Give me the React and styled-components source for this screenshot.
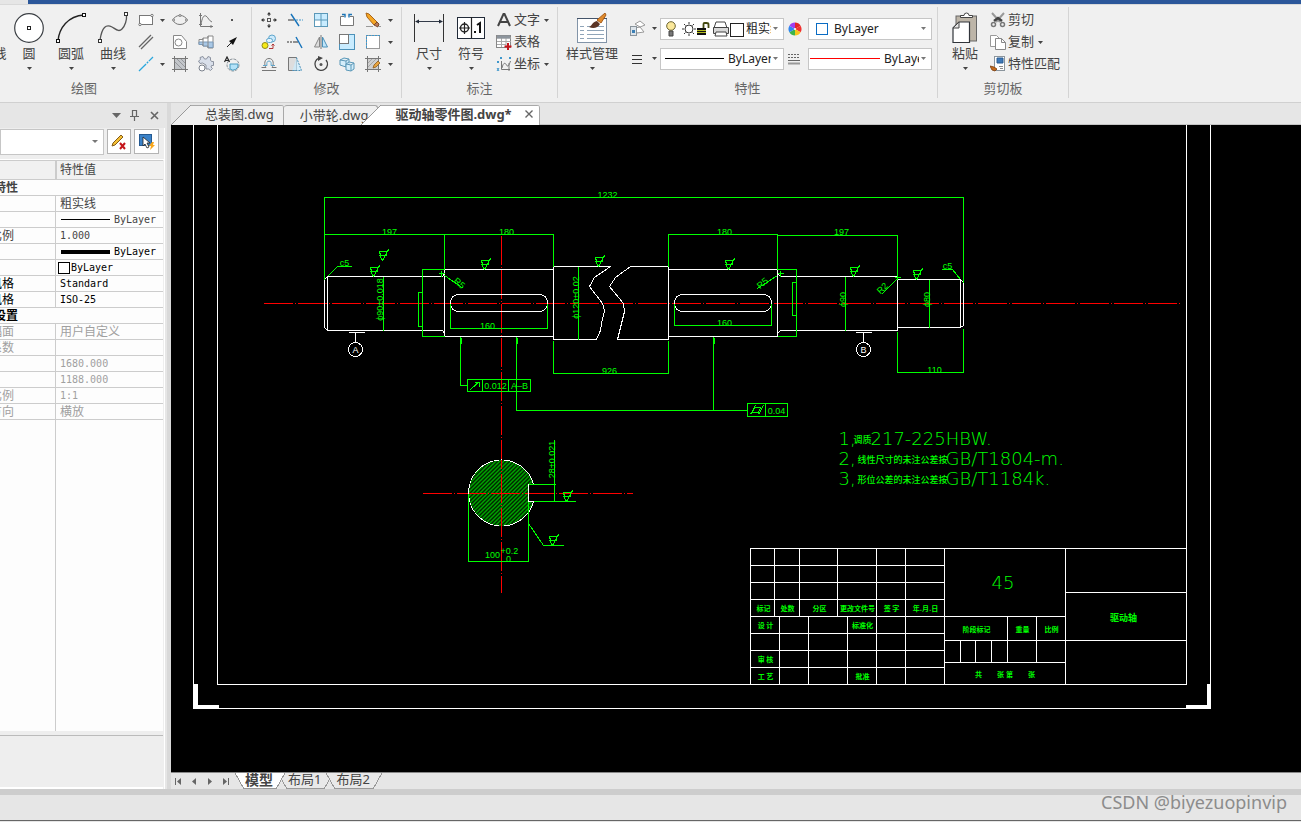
import React from "react";
import styled, { createGlobalStyle, css } from "styled-components";

const UI = `"Noto Sans", "Noto Sans CJK SC", sans-serif`;
const MONO = `"DejaVu Sans Mono", "Noto Sans CJK SC", monospace`;
const CAD = `"DejaVu Sans Light", "DejaVu Sans", "Noto Sans CJK SC", sans-serif`;
const DIM = `"Liberation Sans", sans-serif`;

const Global = createGlobalStyle`
  * { box-sizing: border-box; }
  body { margin: 0; background: #e6e6e6; font-family: ${UI}; font-size: 13px; color: #444; }
  button, select { font: inherit; color: inherit; margin: 0; padding: 0; border: 0; background: none; }
  svg { display: block; flex: none; }
`;

const Page = styled.div`display: flex; flex-direction: column; min-height: 100vh; overflow: hidden;`;
const TitleStrip = styled.div`height: 4px; margin-left: 28px; background: #2b579a;`;

/* ---------- ribbon ---------- */
const Ribbon = styled.header`
  display: flex; height: 99px; background: #f0f0f0; overflow: hidden;
  border-top: 1px solid #d9d9d9; border-bottom: 1px solid #d0d0d0;
`;
const GroupBox = styled.section`
  display: flex; flex-direction: column; flex: none; margin: 2px 0 4px ${p => p.$shift || 0}px;
  padding: 2px ${p => p.$pr ?? 6}px 0 ${p => p.$pl ?? 6}px; border-right: 1px solid #d4d4d4;
`;
const GroupBody = styled.div`display: flex; height: 66px;`;
const GroupTitle = styled.h2`
  margin: 5px ${p => -(p.$pr ?? 6)}px 0 ${p => -(p.$pl ?? 6)}px; text-align: center;
  font-size: 13px; font-weight: 400; line-height: 16px; color: #666;
`;
const BigButton = styled.button`
  width: ${p => p.$w || 42}px; padding-top: 4px; display: flex; flex-direction: column; align-items: center;
  line-height: 16px; white-space: nowrap;
`;
const BigIcon = styled.span`height: 30px; margin-bottom: 2px; display: flex; align-items: center;`;
const CaretBox = styled.span`display: flex; height: 8px; width: 8px; margin-top: ${p => p.$mt || 0}px; align-items: center; justify-content: center;`;
const IconGrid = styled.div`display: grid; grid-template-columns: ${p => p.$cols}; grid-auto-rows: 22px;`;
const IconButton = styled.button`display: flex; align-items: center; justify-content: center;`;
const List = styled.div`display: flex; flex-direction: column;`;
const ListButton = styled.button`
  height: 22px; padding-left: 4px; display: flex; align-items: center; gap: 2px; line-height: 16px; white-space: nowrap;
`;
const ListText = styled.span`padding-bottom: 2px;`;
const PropRows = styled.div`display: flex; flex-direction: column; gap: 9px; padding: 9px 0 0 8px;`;
const PropRow = styled.div`display: flex; height: 21px; align-items: center;`;
const SplitButton = styled.button`width: 32px; display: flex; align-items: center; gap: 4px;`;
const Slot = styled.span`width: 24px; padding-left: 3px; display: flex;`;
const Combo = styled.label`
  width: ${p => p.$w || 124}px; height: ${p => p.$h || 22}px; display: flex; align-items: center; background: #fff;
  border: 1px solid #c6c6c6; padding: 0 4px 0 ${p => p.$pl ?? 4}px; overflow: hidden;
`;
const ComboSelect = styled.select`
  appearance: none; min-width: 0; flex: 1; width: 0; height: 18px; outline: 0; overflow: hidden; white-space: nowrap;
  font-size: 12px; color: #222; margin-left: ${p => p.$ml || 0}px;
`;

const Svg = ({ w = 16, h = 16, children, ...r }) => (
  <svg width={w} height={h} viewBox={`0 0 ${w} ${h}`} fill="none" stroke="#555" aria-hidden="true" {...r}>{children}</svg>
);
const Caret = ({ mt }) => <CaretBox $mt={mt}><Svg w={5} h={3}><path d="M0 0h5L2.500 3z" fill="#444" stroke="none" /></Svg></CaretBox>;
const LightCaret = () => <CaretBox><Svg w={5} h={3}><path d="M0 0h5L2.500 3z" fill="#777" stroke="none" /></Svg></CaretBox>;

const G = {
  polyline: <Svg w={30} h={30}><path d="M1 26C12 24 17 20 18 13" stroke="#333" strokeWidth="1.500" /></Svg>,
  circle: <Svg w={30} h={30}><circle cx="15" cy="15" r="14.300" fill="#fff" stroke="#3c4045" strokeWidth="1.200" /><rect x="13.500" y="13.500" width="3" height="3" stroke="#222" /></Svg>,
  arc: <Svg w={30} h={30}><path d="M2 28C3 15 12 3 28 2" stroke="#222" strokeWidth="1.400" /><rect x=".5" y="26.500" width="3" height="3" fill="#fff" stroke="#111" /><rect x="26.500" y=".5" width="3" height="3" fill="#fff" stroke="#111" /></Svg>,
  curve: <Svg w={32} h={32}><path d="M3 28C5 15 9 12 15 15C20 18 22 20 25 17C28 14 30 8 29.500 3" stroke="#555" strokeWidth="1.300" /><rect x="1.500" y="27.500" width="3" height="3" fill="#fff" stroke="#333" /><rect x="27.500" y="0.500" width="3" height="3" fill="#fff" stroke="#333" /></Svg>,
  rect: <Svg><rect x="1.500" y="3.500" width="13" height="9" fill="#fff" stroke="#777" /><circle cx="2" cy="12.500" r="1.200" fill="#fff" stroke="#777" /><circle cx="14" cy="3.500" r="1.200" fill="#fff" stroke="#777" /></Svg>,
  dbl: <Svg><path d="M1 13L13 1M3 15L15 3" stroke="#666" strokeWidth="1.300" /></Svg>,
  ray: <Svg><path d="M1 15L15 1" stroke="#2aa7dd" strokeWidth="1.300" strokeDasharray="10 1 2 1" /></Svg>,
  ellipse: <Svg><ellipse cx="8" cy="8" rx="6.500" ry="4.500" stroke="#777" /><g fill="#fff" stroke="#777"><circle cx="1.500" cy="8" r="1" /><circle cx="14.500" cy="8" r="1" /><circle cx="8" cy="3.500" r="1" /></g></Svg>,
  region: <Svg><path d="M1.500 1.500h8l5 6v7h-13z" fill="#fff" stroke="#888" /><circle cx="6.500" cy="8.500" r="3.500" stroke="#888" /></Svg>,
  hatch: <Svg><rect x="2.500" y="2.500" width="11" height="11" fill="#c3c6ca" stroke="#777" /><path d="M0 2.500h16M0 13.500h16M2.500 0v16M13.500 0v16" stroke="#777" /><path d="M3 6l7 7M5 3l8 8M9 3l4 4" stroke="#8a8d92" strokeWidth=".8" /></Svg>,
  graph: <Svg><path d="M2.500 1v13.500H15M1 3.500h3M1 12.500h3M13 13v3" stroke="#777" /><path d="M3 13C4 5 6 3 8 4C10 5 11 9 14 10" stroke="#777" /></Svg>,
  shaft: <Svg><path d="M1 5.500h4V4h5V2h5v12h-5v-2H5v-1.500H1z" fill="#fff" stroke="#888" /><path d="M1 8h14v5.500h-5V12H5v-1.500H1z" fill="#a9c8e6" stroke="#7c9ab8" /><path d="M5 4v8M10 2v12" stroke="#888" /></Svg>,
  gear: <Svg><path d="M2 1.500l3-1 1.500 2.500h2L10 .5l2.500 1v2.500l1 1.500h2v4h-2l-.5 1.500 1.500 1.500-2 2-2-1.500H8V9L4.500 7 2 7.500.5 5l2-1.500z" fill="#d9dfea" stroke="#8d93a0" /><circle cx="4" cy="12" r="3" fill="#fff" stroke="#7b818c" /></Svg>,
  point: <Svg><rect x="7" y="7" width="2" height="2" fill="#555" stroke="none" /></Svg>,
  arrow: <Svg><path d="M3 13L9 7" stroke="#222" /><path d="M13 3L5 7l4 4z" fill="#111" stroke="none" /></Svg>,
  areaA: <Svg><circle cx="9" cy="9" r="6" stroke="#8a9299" strokeDasharray="3 1" /><path d="M6 8h8a5 5 0 0 1-8 5z" fill="#b4e2f8" stroke="#4c9cc0" /><path d="M.5 6L3 1L5.500 6M1.500 4.500h3" stroke="#222" strokeWidth="1.200" /></Svg>,
  move: <Svg><rect x="6.500" y="6.500" width="3" height="3" stroke="#555" /><path d="M8 0l2 2.500H6zM8 16l2-2.500H6zM0 8l2.500-2v4zM16 8l-2.500-2v4z" fill="#333" stroke="none" /><path d="M8 2v2M8 12v2M2 8h2M12 8h2" stroke="#333" /></Svg>,
  trim: <Svg><path d="M1 8h6" stroke="#333" /><path d="M9 8h7" stroke="#3e97cc" strokeDasharray="2 1" /><path d="M4 2l8 12" stroke="#1673ba" strokeWidth="1.400" /></Svg>,
  extend: <Svg><path d="M0 8h7" stroke="#333" strokeDasharray="2 1" /><path d="M7 8h4" stroke="#333" /><path d="M9 3l6 11" stroke="#1673ba" strokeWidth="1.400" /></Svg>,
  grid: <Svg><rect x="1.500" y="1.500" width="13" height="13" fill="#c9ecff" stroke="#5b98b8" /><rect x="2" y="8" width="6" height="6" fill="#fff" stroke="none" /><path d="M8 1v14M1 8h14" stroke="#5b98b8" /></Svg>,
  breakI: <Svg><path d="M5 4.500H1.500v9h13v-9H11" fill="#fff" stroke="#777" /><path d="M3 2.500h3v3M13 2.500h-3v3" stroke="#1b75b7" strokeWidth="1.400" /></Svg>,
  pencil: <Svg><path d="M1 1l3 1 8 8-3 3-7-8z" fill="#f5a623" stroke="#a8651c" /><path d="M9 13l3-3 2 2-1 3z" fill="#b97a56" stroke="#7c4a2c" /><path d="M1 14.500h7M13 14.500h3" stroke="#999" /></Svg>,
  copy: <Svg><circle cx="11" cy="4.500" r="3.500" fill="#cdeafb" stroke="#5fa6cc" /><rect x="5.500" y="4.500" width="6" height="4" rx="2" fill="#e4f4fd" stroke="#5fa6cc" /><circle cx="4" cy="11.500" r="3" fill="#f6ea18" stroke="#8f8a1e" /><path d="M8 14.500h4V10M10.500 11.500L12 10l1.500 1.500" stroke="#b03636" /></Svg>,
  mirror: <Svg><path d="M6.500 3v10H1.500z" fill="#ddd" stroke="#888" /><path d="M9.500 3v10h5z" fill="#bfe5fa" stroke="#4c91b9" /><path d="M8 1v14" stroke="#777" /></Svg>,
  scale: <Svg><rect x=".5" y=".5" width="15" height="15" fill="#c9ecff" stroke="#4c91b9" /><rect x=".5" y=".5" width="9" height="9" fill="#fff" stroke="#777" /></Svg>,
  select: <Svg><rect x="1.500" y="1.500" width="13" height="13" fill="#fff" stroke="#999" /><path d="M1.500 14V1.500H15" stroke="#3e97cc" strokeDasharray="2 1" /></Svg>,
  offset: <Svg><path d="M1 14.500h14" stroke="#777" /><path d="M.5 11.500h4.500C3 9 3 2.500 8 2.500s5 6.500 3 9h4.500" stroke="#777" /><path d="M2 9.500h4C5.500 7 6 5 8 5s2.500 2 2 4.500h4" stroke="#5fa6cc" /></Svg>,
  stretch: <Svg><path d="M1.500 1.500h8v13h-8z" fill="#ddd" stroke="#777" /><path d="M9.500 1.500l5 13h-9" fill="#c9ecff" fillOpacity=".7" stroke="#4c91b9" strokeDasharray="2 1" /></Svg>,
  rotate: <Svg><path d="M6 2.200A6.300 6.300 0 1 0 13 4" stroke="#444" strokeWidth="1.300" /><path d="M5 0l5 2-5 3z" fill="#444" stroke="none" /><circle cx="8" cy="8.500" r="1.500" fill="#555" stroke="none" /></Svg>,
  cubes: <Svg><path d="M1 4l4-2 5 1v6l-3 2-6-2zM1 4l6 1 3-2M7 5v6" fill="#d4eefb" stroke="#5b98b8" /><path d="M7 8l3-2 5 1v6l-3 2-5-1zM7 8l5 1 3-2M12 9v6" fill="#d4eefb" stroke="#5b98b8" /></Svg>,
  hatchEdit: <Svg><rect x="2.500" y="2.500" width="11" height="11" fill="#cfcfcf" stroke="#777" /><path d="M0 2.500h16M0 13.500h16M2.500 0v16M13.500 0v16" stroke="#777" /><path d="M3 7l4-4M3 11l8-8" stroke="#999" strokeWidth=".8" /><path d="M8 12l1-3 4-4 2 2-4 4z" fill="#e8a33d" stroke="#8c5a1d" strokeWidth=".8" /></Svg>,
  dim: <Svg w={30} h={30}><path d="M.5 1v28M29.500 1v28" stroke="#333" /><path d="M2 8.500h26" stroke="#333b49" /><path d="M1 8.500l4-2v4zM29 8.500l-4-2v4z" fill="#222b39" stroke="none" /></Svg>,
  tol: <Svg w={28} h={24}><rect x=".5" y="1.500" width="27" height="21" fill="#fff" stroke="#222b39" /><path d="M14.500 1v21M2 12h11M7.500 6v12" stroke="#222" strokeWidth="1.200" /><circle cx="7.500" cy="12" r="4" stroke="#222" strokeWidth="1.400" /><path d="M17 15h2v2h-2z" fill="#111" stroke="none" /><path d="M20 9l3-2v10" stroke="#111" strokeWidth="2" /></Svg>,
  letter: <Svg><path d="M2 14L7.500 2h1L14 14M4 10h8" stroke="#444" strokeWidth="2" /></Svg>,
  table: <Svg><rect x=".5" y="1.500" width="14" height="12" fill="#fff" stroke="#888" /><path d="M1 4h14M1 7.500h14M1 10.500h9M5.500 4v9M10 4v9" stroke="#aaa" /><path d="M1 3h13" stroke="#8d959d" strokeWidth="3" /><path d="M12 9v7M8.500 12.500h7" stroke="#c4161c" strokeWidth="2" /></Svg>,
  coord: <Svg><path d="M5.500 5v8.500H14M6 12C7 7 9 6 10.500 9s3-1 4-4" stroke="#777" /><path d="M4 1l2 2M6 1L4 3M13 1l2 2M15 1l-2 2M1 5l2 2M3 5L1 7M1 12l2 3M3 12l-2 3" stroke="#3e97cc" /><path d="M13 7v8" stroke="#777" /></Svg>,
  styleMgr: <Svg w={32} h={30}><rect x="1.500" y="5.500" width="29" height="24" fill="#fff" stroke="#8294a8" /><path d="M4 13.500h4M4 17.500h4M4 21.500h4M4 25.500h4M11 13.500h17M11 17.500h17M11 21.500h17M11 25.500h17" stroke="#8fa4b8" /><path d="M1 5.500h30" stroke="#44546a" /><path d="M21 7L29 0l1 2-5 8z" fill="#e08a2c" stroke="#a85d18" /><path d="M13 14c3-1 3-5 8-6l3 3c-2 4-7 5-11 3z" fill="#5b3424" stroke="none" /></Svg>,
  layer: <Svg w={18} h={18}><path d="M7 4l5-3 5 4-5 2zM7 8l5-1 4 5-7 1z" fill="#fff" stroke="#999" /><rect x="2.500" y="6.500" width="6" height="9" fill="#dde4ea" stroke="#8a949c" /><rect x="4" y="10" width="3" height="3" fill="#3b7fb5" stroke="none" /></Svg>,
  bars: <Svg w={18} h={18}><path d="M4 5.500h10M4 9.500h10M4 13.500h10" stroke="#333" /></Svg>,
  widths: <Svg w={14} h={14}><path d="M1 2.500h12M1 5.500h12" stroke="#666" strokeDasharray="2 1" /><path d="M1 8.500h12" stroke="#666" /><path d="M1 11.500h12" stroke="#999" strokeWidth="2" /></Svg>,
  wheel: (
    <Svg w={16} h={16} stroke="none">
      <path d="M8 8V1.500a6.500 6.500 0 0 1 5.600 3.200z" fill="#e52528" /><path d="M8 8L13.600 4.700A6.500 6.500 0 0 1 13.600 11.300z" fill="#f2302f" />
      <path d="M8 8l5.600 3.300A6.500 6.500 0 0 1 8 14.500z" fill="#f7c61a" /><path d="M8 8v6.500a6.500 6.500 0 0 1-5.600-3.200z" fill="#3cb44a" />
      <path d="M8 8L2.400 11.300A6.500 6.500 0 0 1 2.400 4.700z" fill="#2f86f0" /><path d="M8 8L2.400 4.700A6.500 6.500 0 0 1 8 1.500z" fill="#a03ff0" />
      <circle cx="8" cy="8" r="1" fill="#fff" />
    </Svg>
  ),
  paste: <Svg w={28} h={32}><rect x="5" y="4" width="20.500" height="25" fill="#bdb5a8" stroke="#666" /><path d="M9.500 5.500V3.500h3.500a2.500 2.500 0 0 1 5 0h3.500v2z" fill="#fff" stroke="#444" /><path d="M2 16l6-6h10.500v20.500H2z" fill="#fff" stroke="#30343a" strokeWidth="1.200" /><path d="M2 16h6v-6z" fill="#e4e4e4" stroke="#444" /></Svg>,
  cut: <Svg><path d="M2 1l8 9M14 1L6 10" stroke="#999" strokeWidth="2" /><path d="M4 9l4-3 4 3" stroke="#444" strokeWidth="2.500" /><circle cx="3.500" cy="12.500" r="2" stroke="#777" strokeWidth="1.500" /><circle cx="12.500" cy="12.500" r="2" stroke="#777" strokeWidth="1.500" /></Svg>,
  copyDoc: <Svg><path d="M.5 1.500h6l3 3v8h-9z" fill="#fff" stroke="#999" /><path d="M5.500 4.500h6l4 4v7h-10z" fill="#fff" stroke="#888" /><path d="M11.500 4.500v4h4" stroke="#888" /></Svg>,
  match: <Svg><rect x="4.500" y=".5" width="10" height="14" fill="#fff" stroke="#8a949c" /><path d="M7 2h6v5H7z" fill="#3d78b8" stroke="#285b91" /><path d="M9 10.500h4M10 12.500h3" stroke="#888" /><path d="M0 10l4 1 3 2-2 2-3-1z" fill="#c46a1c" stroke="#7a3d10" strokeWidth=".8" /></Svg>,
};
const LayerState = () => (
  <Svg w={79} h={20}>
    <circle cx="6" cy="7" r="4.300" fill="#fbe89a" stroke="#6c6432" /><path d="M4 12h4v5H4z" fill="#777" stroke="#444" />
    <circle cx="24" cy="10" r="4" fill="#fff" stroke="#333" />
    <path d="M24 3v2M24 15v2M17 10h2M29 10h2M19 5l1.500 1.500M29 5l-1.500 1.500M19 15l1.500-1.500M29 15l-1.500-1.500" stroke="#333" />
    <path d="M32 9h9v7h-9z" fill="#111" stroke="none" /><path d="M32 11.500h9M32 13.500h9" stroke="#b5bd22" /><path d="M38.500 9V5q0-1 1-1h2q2 0 2 1.500V9" stroke="#454a12" strokeWidth="1.800" />
    <path d="M51 3h9l2 6H49z" fill="#fff" stroke="#444" /><path d="M48.500 8.500h15v6h-15z" fill="#d8d8d8" stroke="#444" /><path d="M51 13h10l1 4H50z" fill="#fff" stroke="#444" />
    <rect x="65.500" y="4.500" width="13" height="13" fill="#fff" stroke="#222" />
  </Svg>
);
const LinePreview = ({ w, color }) => <Svg w={w} h={3}><path d={`M0 1.500H${w}`} stroke={color} shapeRendering="crispEdges" /></Svg>;

const Group = ({ title, children, ...p }) => (
  <GroupBox {...p}><GroupBody>{children}</GroupBody><GroupTitle {...p}>{title}</GroupTitle></GroupBox>
);
const Big = ({ icon, label, w }) => <BigButton $w={w}><BigIcon>{icon}</BigIcon>{label}<Caret mt={3} /></BigButton>;
const Small = ({ icon, label, menu }) => (
  <ListButton>{icon}<ListText>{label}</ListText>{menu && <Caret />}</ListButton>
);
const Ico = ({ n }) => <IconButton aria-label={n}>{G[n]}</IconButton>;
const Drop = ({ label }) => <IconButton aria-label={label}><Caret /></IconButton>;

const RibbonBar = () => (
  <Ribbon>
    <Group title="绘图" $shift={-83} $pl={49}>
      <Big icon={G.polyline} label="多段线" /><Big icon={G.circle} label="圆" /><Big icon={G.arc} label="圆弧" /><Big icon={G.curve} label="曲线" />
      <IconGrid $cols="24px 9px 26px 26px 26px">
        <Ico n="rect" /><Drop label="rect menu" /><Ico n="ellipse" /><Ico n="graph" /><Ico n="point" />
        <Ico n="dbl" /><span /><Ico n="region" /><Ico n="shaft" /><Ico n="arrow" />
        <Ico n="ray" /><Drop label="ray menu" /><Ico n="hatch" /><Ico n="gear" /><Ico n="areaA" />
      </IconGrid>
    </Group>
    <Group title="修改" $pl={4}>
      <IconGrid $cols="repeat(5, 26px) 9px">
        <Ico n="move" /><Ico n="trim" /><Ico n="grid" /><Ico n="breakI" /><Ico n="pencil" /><Drop label="erase menu" />
        <Ico n="copy" /><Ico n="extend" /><Ico n="mirror" /><Ico n="scale" /><Ico n="select" /><Drop label="select menu" />
        <Ico n="offset" /><Ico n="stretch" /><Ico n="rotate" /><Ico n="cubes" /><Ico n="hatchEdit" /><Drop label="edit menu" />
      </IconGrid>
    </Group>
    <Group title="标注" $pr={7}>
      <Big icon={G.dim} label="尺寸" /><Big icon={G.tol} label="符号" />
      <List><Small icon={G.letter} label="文字" menu /><Small icon={G.table} label="表格" /><Small icon={G.coord} label="坐标" menu /></List>
    </Group>
    <Group title="特性" $pr={5}>
      <Big icon={G.styleMgr} label="样式管理" w={56} />
      <PropRows>
        <PropRow>
          <SplitButton aria-label="layers">{G.layer}<Caret /></SplitButton>
          <Combo><LayerState /><ComboSelect $ml={2} aria-label="图层"><option>粗实线</option></ComboSelect><LightCaret /></Combo>
          <Slot>{G.wheel}</Slot>
          <Combo><Svg w={20} h={14}><rect x="3.500" y="1.500" width="11" height="11" fill="#fff" stroke="#0a6cc4" /></Svg>
            <ComboSelect $ml={1} aria-label="颜色"><option>ByLayer</option></ComboSelect><LightCaret /></Combo>
        </PropRow>
        <PropRow>
          <SplitButton aria-label="line types">{G.bars}<Caret /></SplitButton>
          <Combo><LinePreview w={59} color="#000" /><ComboSelect $ml={4} aria-label="线型"><option>ByLayer</option></ComboSelect><LightCaret /></Combo>
          <Slot>{G.widths}</Slot>
          <Combo $pl={1}><LinePreview w={70} color="#f00" /><ComboSelect $ml={4} aria-label="线宽"><option>ByLayer</option></ComboSelect><LightCaret /></Combo>
        </PropRow>
      </PropRows>
    </Group>
    <Group title="剪切板" $pr={8}>
      <Big icon={G.paste} label="粘贴" />
      <List><Small icon={G.cut} label="剪切" /><Small icon={G.copyDoc} label="复制" menu /><Small icon={G.match} label="特性匹配" /></List>
    </Group>
  </Ribbon>
);

/* ---------- property panel ---------- */
const Main = styled.main`display: flex; flex: 1;`;
const Panel = styled.aside`
  width: 171px; flex: none; display: flex; flex-direction: column; overflow: hidden;
  background: #e6e6e6; border-right: 4px solid #d9d9d9;
`;
const PanelHead = styled.div`height: 25px; display: flex; justify-content: flex-end; align-items: center; gap: 8px; padding-right: 7px;`;
const PanelInner = styled.div`flex: 1; display: flex; flex-direction: column; margin-right: 2px; background: #eee; border-right: 1px solid #fff;`;
const PanelTools = styled.div`display: flex; gap: 3px; padding: 1px 5px 4px 0; height: 32px; border-bottom: 1px solid #fff;`;
const ToolButton = styled.button`width: 25px; height: 25px; display: flex; align-items: center; justify-content: center; background: #fff; border: 1px solid #b4b4b4;`;
const PropTable = styled.table`
  width: 175px; margin-left: -12px; border-collapse: separate; border-spacing: 0; table-layout: fixed;
  font-size: 12px; background: #fdfdfd; color: #444; border-top: 1px solid #ccc;
`;
const Cell = styled.td`
  height: 16px; padding: 0 0 0 ${p => (p.$section ? 6 : 2)}px; line-height: 15px; white-space: nowrap; overflow: hidden;
  border-bottom: 1px solid #ccc; font-weight: ${p => (p.$section ? 700 : 400)};
  color: ${p => (p.$tone === "off" ? "#a0a0a0" : p.$tone === "dark" ? "#000" : "#444")};
`;
const ValueCell = styled(Cell)`padding-left: 4px; border-left: 1px solid #ccc; font-family: ${p => (p.$cjk ? UI : MONO)}; font-size: ${p => (p.$cjk ? 12 : 10)}px;`;
const ValueWrap = styled.span`display: flex; align-items: center; gap: ${p => p.$gap}px; margin-left: ${p => p.$ml || 0}px;`;
const HeadCell = styled.th`
  height: 19px; padding: 0 0 0 3px; background: #f1f1f1; text-align: left; font-weight: 400; line-height: 18px;
  border-bottom: 1px solid #ccc; ${p => p.$sep && css`border-left: 2px solid #ccc;`}
`;
const Filler = styled.div`flex: 1; margin-right: 1px; background: #fdfdfd; display: flex; &::before { content: ""; width: 55px; border-right: 1px solid #ccc; }`;
const PanelFoot = styled.div`height: 54px; margin: 4px 1px 0 0; border-top: 1px solid #bbb; border-bottom: 2px solid #fff;`;

const rows = [
  ["", "粗实线", "", 1], ["", "thin", ""], ["比例", "1.000", ""], ["", "thick", "dark"], ["", "box", "dark"],
  ["风格", "Standard", "dark"], ["风格", "ISO-25", "dark"], null,
  ["幅面", "用户自定义", "off", 1], ["系数", "", "off"], ["", "1680.000", "off"], ["", "1188.000", "off"], ["比例", "1:1", "off"], ["方向", "横放", "off", 1],
];
const value = v => {
  if (v === "thin" || v === "thick")
    return <ValueWrap $gap={4} $ml={1}><Svg w={49} h={5} stroke="none"><rect y={v === "thin" ? 2 : 1} width="49" height={v === "thin" ? 1 : 4} fill="#000" /></Svg>ByLayer</ValueWrap>;
  if (v === "box") return <ValueWrap $gap={1} $ml={-2}><Svg w={12} h={12}><rect x=".5" y=".5" width="11" height="11" fill="#fff" stroke="#000" /></Svg>ByLayer</ValueWrap>;
  return v;
};
const PropertyPanel = () => (
  <Panel>
    <PanelHead>
      <Svg w={9} h={5}><path d="M0 0h9L4.500 5z" fill="#666" stroke="none" /></Svg>
      <Svg w={12} h={13}><path d="M3 1.500h5M3.500 1v6M7.500 1v6M1 7.500h9M5.500 8v4" stroke="#666" strokeWidth="1.200" /></Svg>
      <Svg w={11} h={11}><path d="M2 2l7 7M9 2L2 9" stroke="#666" strokeWidth="1.600" /></Svg>
    </PanelHead>
    <PanelInner>
      <PanelTools>
        <Combo $w={105} $h={26}><ComboSelect aria-label="对象" /><Svg w={7} h={4}><path d="M0 0h6L3 3z" fill="#777" stroke="none" /></Svg></Combo>
        <ToolButton aria-label="clear selection"><Svg><path d="M1 12l1-3 8-8 2 2-8 8z" fill="#f4bf35" stroke="#835b18" /><path d="M9 9l5 6M14 9l-5 6" stroke="#c4161c" strokeWidth="2" /></Svg></ToolButton>
        <ToolButton aria-label="quick select"><Svg><rect x=".5" y=".5" width="12" height="11" fill="#3b82c8" stroke="#255a92" /><path d="M4 3v9l2-2 2 4 2-1-2-4h3z" fill="#fff" stroke="#222" strokeWidth=".8" /><path d="M13 8l-3 4h2l-1 4 5-5h-2l1-3z" fill="#f8a71d" stroke="none" /></Svg></ToolButton>
      </PanelTools>
      <PropTable>
        <colgroup><col width="67" /><col /></colgroup>
        <thead><tr><HeadCell aria-label="特性名" /><HeadCell $sep>特性值</HeadCell></tr></thead>
        <tbody>
          <tr><Cell colSpan={2} $section>特性</Cell></tr>
          {rows.map((r, i) => r
            ? <tr key={i}><Cell $tone={r[2]}>{r[0]}</Cell><ValueCell $tone={r[2]} $cjk={r[3]}>{value(r[1])}</ValueCell></tr>
            : <tr key={i}><Cell colSpan={2} $section $tone="dark">设置</Cell></tr>)}
        </tbody>
      </PropTable>
      <Filler />
      <PanelFoot />
    </PanelInner>
  </Panel>
);

/* ---------- document area ---------- */
const Work = styled.div`flex: 1; min-width: 0; display: flex; flex-direction: column;`;
const DocTabs = styled.nav`height: 22px; display: flex; align-items: flex-end; background: #e6e6e6; border-bottom: 1px solid #c4c4c4;`;
const DocTab = styled.button`
  --fill: ${p => (p.$active ? "#fff" : "#f0f0f0")};
  height: 20px; margin: 0 0 -1px ${p => (p.$active ? -17 : 0)}px; padding: 0 ${p => (p.$active ? 5 : 9)}px 2px ${p => p.$pl}px;
  line-height: 18px; display: flex; align-items: center; gap: 12px; white-space: nowrap; color: #444; position: relative;
  font-weight: ${p => (p.$active ? 700 : 400)}; border-right: 1px solid #a8a8a8; border-top-right-radius: 3px;
  ${p => p.$slope
    ? css`background:
        linear-gradient(to bottom right, transparent 48%, #999 48% 52%, var(--fill) 52%) 0 0 / 20px 100% no-repeat,
        linear-gradient(#a8a8a8, #a8a8a8) 20px 0 / 100% 1px no-repeat,
        linear-gradient(var(--fill), var(--fill)) 20px 0 / 100% 100% no-repeat;`
    : css`background: var(--fill); border-top: 1px solid #a8a8a8; border-top-left-radius: 3px;`}
`;
const Canvas = styled.div`flex: 1; background: #000; display: flex; min-height: 0; & > svg { flex: 1; width: 100%; min-width: 0; height: auto; }`;
const LayoutBar = styled.nav`height: 17px; display: flex; background: #e6e6e6; border-top: 1px solid #888;`;
const NavButton = styled.button`width: 16px; display: flex; align-items: center; justify-content: flex-start; padding-left: 3px;`;
const LayoutTab = styled.button`
  --fill: ${p => (p.$active ? "#fff" : "#e9e9e9")};
  position: relative; z-index: ${p => (p.$active ? 1 : 0)};
  height: 16px; margin-left: ${p => (p.$active ? 0 : -7)}px; padding: 0 12px 3px 10px; line-height: 13px; white-space: nowrap;
  font-size: ${p => (p.$active ? 14 : 13)}px; font-weight: ${p => (p.$active ? 700 : 400)};
  background:
    linear-gradient(to top right, transparent 47%, #999 47% 53%, var(--fill) 53%) 0 0 / 9px 100% no-repeat,
    linear-gradient(to top left, transparent 47%, #999 47% 53%, var(--fill) 53%) 100% 0 / 9px 100% no-repeat,
    linear-gradient(#999, #999) 9px 100% / calc(100% - 18px) 1px no-repeat,
    linear-gradient(var(--fill), var(--fill)) 9px 0 / calc(100% - 18px) 100% no-repeat;
`;
const Divider = styled.div`height: 6px; background: #cdcdcd;`;
const StatusBar = styled.footer`
  height: 26px; display: flex; justify-content: flex-end; padding: 0 14px; background: #e6e6e6; border-bottom: 1px solid #666;
  font-size: 18px; line-height: 14px; color: #8c8c8c; margin-bottom: 1px;
`;

/* ---------- drawing ---------- */
const Dim = styled.text`font: 9px ${DIM}; fill: ${p => p.$c || "#0f0"}; stroke: none; text-anchor: middle;`;
const Note = styled.text`font: 200 18px ${CAD}; fill: #0f0; stroke: none;`;
const Hanzi = styled.text`font: 500 9px "Noto Sans CJK SC", sans-serif; fill: #0f0; stroke: none;`;
const Label = styled.text`font: 700 ${p => p.$s || 7}px "Noto Sans CJK SC", sans-serif; fill: #0f0; stroke: none; text-anchor: middle;`;

const VDim = ({ x, y, children }) => <Dim transform={`translate(${x} ${y}) rotate(-90)`}>{children}</Dim>;
const Rough = ({ x, y }) => <path d={`M${x - 3} ${y - 9}h7v4h-6zM${x - 3} ${y - 5}l3 5l6 -11`} />;

const Drawing = () => (
  <svg viewBox="171 125 1130 647" preserveAspectRatio="xMinYMin meet" role="img" aria-label="驱动轴零件图">
    <defs>
      <pattern id="hatch" width="4" height="4" patternUnits="userSpaceOnUse"><path d="M-1 1L1 -1M0 4L4 0M3 5L5 3" stroke="#0f0" strokeWidth="1.200" shapeRendering="auto" /></pattern>
    </defs>
    <g transform="translate(.5 .5)" fill="none" strokeWidth="1" shapeRendering="crispEdges">
      <g stroke="#fff">
        <path d="M193 120V708H1210V120M217 120V684H1186V120" />
        <path d="M195 683V706H218M1185 706H1208V683" strokeWidth="4" />
      </g>
      <path d="M533 484A33 33 0 1 0 533 501H528V484Z" fill="url(#hatch)" stroke="none" />
      <g stroke="#f00" strokeDasharray="29 2 1 2">
        <path d="M263 303H1180M501 235V592M422 493H632" />
      </g>
      <g stroke="#fff">
        <path d="M327 276V330L324 327V279L327 276H442L444 273M327 330H442L444 333" />
        <path d="M444 269V336H553M444 269H553M553 266V339H596L600 330L601 323L604 310L602 303L589 286L594 277L610 266H553" />
        <path d="M668 266V339H617L621 323L624 311L623 303L609 286L615 277L630 266H668M668 269H777V336H668" />
        <path d="M777 273L780 276H897V330H780L777 333M897 279H960L963 282V325L960 327H897M960 279V327" />
        <rect x="450" y="294" width="97" height="17" rx="8" />
        <rect x="674" y="294" width="97" height="17" rx="8" />
        <path d="M348 332H364M355 332V342M855 332H871M863 332V342" />
        <circle cx="355" cy="349" r="7" /><circle cx="863" cy="349" r="7" />
        <path d="M533 484A33 33 0 1 0 533 501H528V484H533" />
      </g>
      <g stroke="#0f0">
        <path d="M324 279V197H963V282M324 234H553M444 234V269M553 234V266M668 266V234H777V269M777 235H897V279" />
        <path d="M553 340V373H668V340M897 331V372H963V328M450 303V328H547V303M674 303V325H771V303" />
        <path d="M383 276V330M578 266V339M845 276V330M929 279V327" />
        <path d="M444 269H422V336H444M422 292H418V326H422M777 269H796V336H777M796 282H792V315H796" />
        <path d="M327 276L337 266H351M960 279L952 269H941" />
        <path d="M438 273H444M441 270V276M444 275L463 288M777 273H783M780 270V276M757 288L777 275M881 294L898 277M894 277H900" />
        <path d="M460 336V385H467M516 336V410H747M713 336V410" />
        <path d="M460 337V343M516 337V343M713 337V343" strokeWidth="2" />
        <path d="M467 379H530V391H467ZM482 379V391M508 379V391M747 403H787V416H747ZM765 403V416" />
        <path d="M470 389L479 381M474 382H479V386M750 414L755 405M758 414L763 405M754 407H760L758 412H752Z" />
        <path d="M528 484H555M533 501H575M554 439V501M468 493V561H528V501M528 523L543 545H563" />
        <Rough x={382} y={260} /><Rough x={373} y={276} /><Rough x={484} y={269} /><Rough x={598} y={266} /><Rough x={728} y={269} />
        <Rough x={853} y={276} /><Rough x={916} y={279} /><Rough x={566} y={501} /><Rough x={552} y={545} />
      </g>
      <Dim x="607" y="197">1232</Dim><Dim x="389" y="234">197</Dim><Dim x="506" y="234">180</Dim><Dim x="724" y="234">180</Dim><Dim x="841" y="234">197</Dim>
      <Dim x="487" y="328">160</Dim><Dim x="724" y="325">160</Dim><Dim x="609" y="373">926</Dim><Dim x="934" y="372">110</Dim>
      <Dim x="344" y="265">c5</Dim><Dim x="947" y="268">c5</Dim>
      <VDim x={382} y={299}>ϕ90±0.018</VDim><VDim x={578} y={297}>ϕ120±0.02</VDim><VDim x={845} y={299}>ϕ90</VDim><VDim x={929} y={299}>ϕ80</VDim><VDim x={554} y={459}>28±0.021</VDim>
      <Dim transform="translate(457 285) rotate(40)">R5</Dim><Dim transform="translate(764 285) rotate(-40)">R5</Dim><Dim transform="translate(884 290) rotate(-45)">R2</Dim>
      <Dim x="495" y="388">0.012</Dim><Dim x="519" y="388">A–B</Dim><Dim x="776" y="413">0.04</Dim>
      <Dim x="355" y="352" $c="#fff">A</Dim><Dim x="863" y="352" $c="#fff">B</Dim>
      <Dim x="492" y="557">100</Dim><Dim x="509" y="553">+0.2</Dim><Dim x="508" y="561">0</Dim>

      <Note x="838" y="444">1,<tspan x="870">217-225HBW.</tspan></Note><Hanzi x="853" y="442">调质</Hanzi>
      <Note x="838" y="464">2,<tspan x="945">GB/T1804-m.</tspan></Note><Hanzi x="857" y="462">线性尺寸的未注公差按</Hanzi>
      <Note x="838" y="484">3,<tspan x="945">GB/T1184k.</tspan></Note><Hanzi x="857" y="482">形位公差的未注公差按</Hanzi>

      <g stroke="#fff">
        <path d="M750 684V548H1186M750 565H944M750 582H944M750 599H944M750 616H1065M750 633H944M750 650H944M750 667H944" />
        <path d="M774 548V616M799 548V616M837 548V616M779 616V684M808 616V684M847 616V684M876 548V684M905 548V684M944 548V684M1065 548V684" />
        <path d="M944 640H1065M944 662H1065M1007 616V662M1036 616V662M960 640V662M975 640V662M991 640V662M1065 592H1186M1065 640H1186" />
      </g>
      <Note x="991" y="588">45</Note>
      <Label x="763" y="610">标记</Label><Label x="787" y="610">处数</Label><Label x="819" y="610">分区</Label><Label x="857" y="610">更改文件号</Label><Label x="891" y="610">签 字</Label><Label x="925" y="610">年.月.日</Label>
      <Label x="765" y="627">设 计</Label><Label x="862" y="627">标准化</Label><Label x="765" y="661">审 核</Label><Label x="765" y="678">工 艺</Label><Label x="862" y="678">批准</Label>
      <Label x="976" y="631">阶段标记</Label><Label x="1022" y="631">重量</Label><Label x="1051" y="631">比例</Label>
      <Label x="978" y="676">共</Label><Label x="1000" y="676">张</Label><Label x="1009" y="676">第</Label><Label x="1031" y="676">张</Label>
      <Label x="1123" y="620" $s={9}>驱动轴</Label>
    </g>
  </svg>
);

const Nav = ({ label, d }) => <NavButton aria-label={label}><Svg w={8} h={8}><path d={d} fill="#666" stroke="none" /></Svg></NavButton>;

export default function App() {
  return (
    <Page>
      <Global />
      <TitleStrip />
      <RibbonBar />
      <Main>
        <PropertyPanel />
        <Work>
          <DocTabs>
            <DocTab $slope $pl={34}>总装图.dwg</DocTab>
            <DocTab $pl={16}>小带轮.dwg</DocTab>
            <DocTab $slope $active $pl={34}>驱动轴零件图.dwg*<Svg w={10} h={10}><path d="M1.500 1.500l7 7M8.500 1.500l-7 7" stroke="#666" strokeWidth="1.400" /></Svg></DocTab>
          </DocTabs>
          <Canvas><Drawing /></Canvas>
          <LayoutBar>
            <Nav label="first" d="M1 1h1v7H1zM7 1v7L3 4.500z" /><Nav label="previous" d="M6 1v7L2 4.500z" /><Nav label="next" d="M2 1v7l4-3.500z" /><Nav label="last" d="M1 1v7l4-3.500zM6 1h1v7H6z" />
            <LayoutTab $active>模型</LayoutTab><LayoutTab>布局1</LayoutTab><LayoutTab>布局2</LayoutTab>
          </LayoutBar>
        </Work>
      </Main>
      <Divider />
      <StatusBar>CSDN @biyezuopinvip</StatusBar>
    </Page>
  );
}
